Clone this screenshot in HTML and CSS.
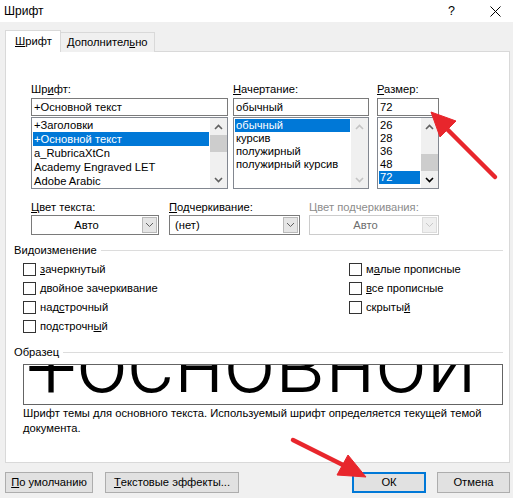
FILE: index.html
```html
<!DOCTYPE html>
<html lang="ru">
<head>
<meta charset="utf-8">
<title>Шрифт</title>
<link rel="stylesheet" href="styles.css">
</head>
<body>
<div class="titlebar">
  <span class="title">Шрифт</span>
  <span class="tb-help">?</span>
  <span class="tb-close"><svg width="11" height="11" viewBox="0 0 11 11"><path d="M0.5 0.5 L10.5 10.5 M10.5 0.5 L0.5 10.5" stroke="#000" stroke-width="1" fill="none"/></svg></span>
</div>
<div class="client">
  <div class="tabs">
    <div class="tab active"><u>Ш</u>рифт</div>
    <div class="tab">Дополнител<u>ь</u>но</div>
  </div>
  <div class="panel">
    <div class="font-row">
      <div class="col col-font">
        <div class="lbl">Шр<u>и</u>фт:</div>
        <div class="input">+Основной текст</div>
        <div class="list">
          <div class="items">
            <div class="item">+Заголовки</div>
            <div class="item sel">+Основной текст</div>
            <div class="item">a_RubricaXtCn</div>
            <div class="item">Academy Engraved LET</div>
            <div class="item">Adobe Arabic</div>
          </div>
          <div class="vscroll">
            <span class="sarr"><svg width="9" height="6" viewBox="0 0 9 6"><path d="M1 5 L4.5 1.5 L8 5" stroke="#606060" stroke-width="1.6" fill="none"/></svg></span>
            <span class="thumb"></span>
            <span class="grow"></span>
            <span class="sarr"><svg width="9" height="6" viewBox="0 0 9 6"><path d="M1 1 L4.5 4.5 L8 1" stroke="#606060" stroke-width="1.6" fill="none"/></svg></span>
          </div>
        </div>
      </div>
      <div class="col col-style">
        <div class="lbl"><u>Н</u>ачертание:</div>
        <div class="input">обычный</div>
        <div class="list">
          <div class="items small">
            <div class="item sel">обычный</div>
            <div class="item">курсив</div>
            <div class="item">полужирный</div>
            <div class="item">полужирный курсив</div>
          </div>
          <div class="vscroll disabled">
            <span class="sarr"><svg width="9" height="6" viewBox="0 0 9 6"><path d="M1 5 L4.5 1.5 L8 5" stroke="#c4c4c4" stroke-width="1.6" fill="none"/></svg></span>
            <span class="grow"></span>
            <span class="sarr"><svg width="9" height="6" viewBox="0 0 9 6"><path d="M1 1 L4.5 4.5 L8 1" stroke="#c4c4c4" stroke-width="1.6" fill="none"/></svg></span>
          </div>
        </div>
      </div>
      <div class="col col-size">
        <div class="lbl"><u>Р</u>азмер:</div>
        <div class="input">72</div>
        <div class="list">
          <div class="items small">
            <div class="item">26</div>
            <div class="item">28</div>
            <div class="item">36</div>
            <div class="item">48</div>
            <div class="item sel">72</div>
          </div>
          <div class="vscroll">
            <span class="sarr"><svg width="9" height="6" viewBox="0 0 9 6"><path d="M1 5 L4.5 1.5 L8 5" stroke="#606060" stroke-width="1.6" fill="none"/></svg></span>
            <span class="grow"></span>
            <span class="thumb"></span>
            <span class="sarr"><svg width="9" height="6" viewBox="0 0 9 6"><path d="M1 1 L4.5 4.5 L8 1" stroke="#000" stroke-width="1.6" fill="none"/></svg></span>
          </div>
        </div>
      </div>
    </div>

    <div class="combo-row">
      <div class="combo-col c1">
        <div class="lbl"><u>Ц</u>вет текста:</div>
        <div class="combo center"><span class="cval">Авто</span><span class="cbtn"><svg width="9" height="6" viewBox="0 0 9 6"><path d="M1 1 L4.5 4.5 L8 1" stroke="#606060" stroke-width="1" fill="none"/></svg></span></div>
      </div>
      <div class="combo-col c2">
        <div class="lbl"><u>П</u>одчеркивание:</div>
        <div class="combo"><span class="cval">(нет)</span><span class="cbtn"><svg width="9" height="6" viewBox="0 0 9 6"><path d="M1 1 L4.5 4.5 L8 1" stroke="#606060" stroke-width="1" fill="none"/></svg></span></div>
      </div>
      <div class="combo-col c3 disabled">
        <div class="lbl">Цвет подчеркивания:</div>
        <div class="combo center"><span class="cval">Авто</span><span class="cbtn"><svg width="9" height="6" viewBox="0 0 9 6"><path d="M1 1 L4.5 4.5 L8 1" stroke="#c8c8c8" stroke-width="1" fill="none"/></svg></span></div>
      </div>
    </div>

    <div class="group-head"><span>Видоизменение</span><span class="gline"></span></div>
    <div class="effects">
      <div class="eff-col">
        <div class="chk"><span class="box"></span><span><u>з</u>ачеркнутый</span></div>
        <div class="chk"><span class="box"></span><span><u>д</u>войное зачеркивание</span></div>
        <div class="chk"><span class="box"></span><span>над<u>с</u>трочный</span></div>
        <div class="chk"><span class="box"></span><span>подстрочн<u>ы</u>й</span></div>
      </div>
      <div class="eff-col">
        <div class="chk"><span class="box"></span><span>м<u>а</u>лые прописные</span></div>
        <div class="chk"><span class="box"></span><span><u>в</u>се прописные</span></div>
        <div class="chk"><span class="box"></span><span>скрыты<u>й</u></span></div>
      </div>
    </div>

    <div class="group-head sample-head"><span>Образец</span><span class="gline"></span></div>
    <div class="sample"><div class="sample-text"><span class="plus">+</span>основной</div></div>
    <div class="desc">Шрифт темы для основного текста. Используемый шрифт определяется текущей темой документа.</div>
  </div>

  <div class="buttons">
    <div class="btn b-default"><u>П</u>о умолчанию</div>
    <div class="btn b-effects"><u>Т</u>екстовые эффекты...</div>
    <div class="spacer"></div>
    <div class="btn b-ok">ОК</div>
    <div class="btn b-cancel">Отмена</div>
  </div>
</div>

<svg class="annot" width="513" height="498" viewBox="0 0 513 498">
  <g fill="#e8262c" stroke="#e8262c">
    <line x1="495" y1="177" x2="447" y2="129" stroke-width="4.5" stroke-linecap="round"/>
    <polygon points="431,112 456,121 440,137" stroke-width="1" stroke-linejoin="round"/>
    <line x1="293" y1="440" x2="343" y2="465" stroke-width="4.5" stroke-linecap="round"/>
    <polygon points="366,477 337,475 348,455" stroke-width="1" stroke-linejoin="round"/>
  </g>
</svg>
</body>
</html>
```
FILE: styles.css
```css
* { box-sizing: border-box; }
html, body { margin: 0; padding: 0; }
body {
  width: 513px;
  height: 498px;
  overflow: hidden;
  position: relative;
  background: #f0f0f0;
  color: #000;
  font-family: "Liberation Sans", Arial, sans-serif;
  font-size: 11.2px;
  line-height: 15px;
}
u { text-decoration: underline; text-underline-offset: 1px; }

.titlebar {
  height: 22px;
  background: #fff;
  display: flex;
  align-items: center;
  padding-left: 4px;
}
.title { width: 444px; flex: none; font-size: 12px; }
.tb-help { font-size: 12.5px; width: 42px; flex: none; }
.tb-close { width: 11px; height: 11px; flex: none; display: flex; }

.client { padding: 8px 3px 0 5px; }

.tabs {
  display: flex;
  align-items: flex-end;
  height: 22px;
  margin-bottom: -1px;
}
.tab {
  height: 20px;
  padding: 0 6px;
  border: 1px solid #d9d9d9;
  border-bottom: none;
  background: #f0f0f0;
  display: flex;
  align-items: center;
  margin-left: -1px;
  width: 95px;
}
.tab.active {
  height: 22px;
  width: 56px;
  margin-left: 0;
  padding-left: 9px;
  background: #fff;
  position: relative;
  z-index: 2;
}

.panel {
  width: 505px;
  height: 412px;
  background: #fff;
  border: 1px solid #d9d9d9;
  padding: 30px 6px 0 8px;
}

.font-row { display: flex; margin-left: 17px; }
.col-font { width: 197px; }
.col-style { width: 136px; margin-left: 5px; }
.col-size { width: 62px; margin-left: 8px; }
.lbl { height: 15px; white-space: nowrap; }
.input {
  margin-top: 1px;
  height: 18px;
  border: 1px solid #7a7a7a;
  padding: 0 2px;
  line-height: 16px;
  white-space: nowrap;
}
.list {
  margin-top: 1px;
  height: 72px;
  border: 1px solid #828790;
  display: flex;
  overflow: hidden;
}
.items { flex: 1; padding: 0 1px; overflow: hidden; }
.item { height: 14px; line-height: 14px; padding-left: 1px; white-space: nowrap; }
.items.small { padding-top: 1px; }
.items.small .item { height: 13px; line-height: 13px; }
.item.sel { background: #0078d7; color: #fff; }

.vscroll {
  width: 17px;
  background: #f0f0f0;
  display: flex;
  flex-direction: column;
}
.sarr { height: 17px; display: flex; align-items: center; justify-content: center; }
.thumb { height: 17px; background: #cdcdcd; }
.grow { flex: 1; }

.combo-row { display: flex; margin-left: 17px; margin-top: 11px; }
.combo-col.c1 { width: 128px; }
.combo-col.c2 { width: 131px; margin-left: 10px; }
.combo-col.c3 { width: 130px; margin-left: 9px; }
.combo-col.disabled .lbl { color: #8c8c8c; }
.combo {
  height: 20px;
  border: 1px solid #7a7a7a;
  display: flex;
  align-items: stretch;
}
.cval { flex: 1; display: flex; align-items: center; padding-left: 5px; }
.combo.center .cval { justify-content: center; padding-left: 0; }
.cbtn {
  width: 15px;
  margin: 1px;
  background: #e5e5e5;
  border: 1px solid #b9b9b9;
  display: flex;
  align-items: center;
  justify-content: center;
}
.combo-col.disabled .combo { border-color: #cccccc; }
.combo-col.disabled .cval { color: #6d6d6d; }
.combo-col.disabled .cbtn { background: #efefef; border-color: #dcdcdc; }

.group-head {
  display: flex;
  align-items: center;
  height: 14px;
  margin-top: 8px;
}
.gline { flex: 1; height: 1px; background: #dcdcdc; margin-left: 4px; }

.effects {
  display: grid;
  grid-template-columns: 326px 1fr;
  margin-left: 9px;
  margin-top: 3px;
}
.chk { height: 19px; display: flex; align-items: center; white-space: nowrap; }
.box {
  width: 13px;
  height: 13px;
  border: 1px solid #333;
  background: #fff;
  margin-right: 4px;
  flex: none;
}

.sample-head { margin-top: 9px; }
.sample {
  margin: 5px 0 0 9px;
  width: 480px;
  height: 41px;
  border: 1px solid #646464;
  overflow: hidden;
}
.sample-text {
  font-family: Roboto, "Liberation Sans", sans-serif;
  font-weight: 300;
  font-size: 90px;
  line-height: 90px;
  margin-top: -48px;
  padding-left: 2px;
  white-space: nowrap;
}
.plus { vertical-align: -7px; }
.desc { margin: 1px 0 0 9px; line-height: 15px; width: 480px; }

.buttons { display: flex; margin-top: 9px; }
.btn {
  height: 21px;
  background: #e1e1e1;
  border: 1px solid #adadad;
  display: flex;
  align-items: center;
  justify-content: center;
  white-space: nowrap;
}
.b-default { width: 88px; }
.b-effects { width: 134px; margin-left: 12px; }
.spacer { flex: 1; }
.b-ok { width: 74px; border: 2px solid #0078d7; }
.b-cancel { width: 73px; margin-left: 11px; }

.annot { position: absolute; left: 0; top: 0; pointer-events: none; }
```
